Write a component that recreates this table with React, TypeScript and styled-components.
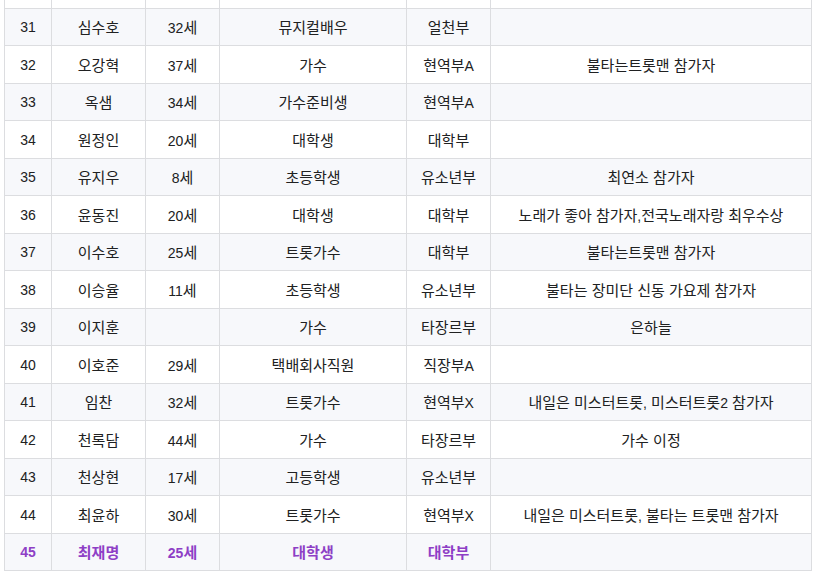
import styled, { createGlobalStyle } from 'styled-components';

const GlobalStyle = createGlobalStyle`
  html, body {
    margin: 0;
    padding: 0;
    background: #fff;
  }
`;

const Page = styled.div`
  padding: 0 7px 0 4px;
  overflow: hidden;
  height: 577px;
`;

const Table = styled.table`
  width: 807px;
  border-collapse: collapse;
  table-layout: fixed;
  font-family: "Liberation Sans", "Noto Sans CJK KR", sans-serif;
  font-size: 15px;
  color: #202122;
`;

const Row = styled.tr<{ $odd?: boolean; $spacer?: boolean }>`
  height: ${(p) => (p.$spacer ? '8px' : '37.5px')};
  background: ${(p) => (p.$odd ? '#f7f8fb' : '#fff')};
`;

const Cell = styled.td<{ $hl?: boolean; $spacer?: boolean }>`
  border: 1px solid #dcdde0;
  border-top: ${(p) => (p.$spacer ? 'none' : '1px solid #dcdde0')};
  padding: 0 6px;
  text-align: center;
  vertical-align: middle;
  white-space: nowrap;
  overflow: hidden;
  color: ${(p) => (p.$hl ? '#8e3fc6' : '#202122')};
  font-weight: ${(p) => (p.$hl ? 700 : 400)};
`;

const Latin = styled.span`
  font-size: 14px;
`;

type Entry = [string, string, string, string, string, string];

const rows: Entry[] = [
  ['31', '심수호', '32세', '뮤지컬배우', '얼천부', ''],
  ['32', '오강혁', '37세', '가수', '현역부A', '불타는트롯맨 참가자'],
  ['33', '옥샘', '34세', '가수준비생', '현역부A', ''],
  ['34', '원정인', '20세', '대학생', '대학부', ''],
  ['35', '유지우', '8세', '초등학생', '유소년부', '최연소 참가자'],
  ['36', '윤동진', '20세', '대학생', '대학부', '노래가 좋아 참가자,전국노래자랑 최우수상'],
  ['37', '이수호', '25세', '트롯가수', '대학부', '불타는트롯맨 참가자'],
  ['38', '이승율', '11세', '초등학생', '유소년부', '불타는 장미단 신동 가요제 참가자'],
  ['39', '이지훈', '', '가수', '타장르부', '은하늘'],
  ['40', '이호준', '29세', '택배회사직원', '직장부A', ''],
  ['41', '임찬', '32세', '트롯가수', '현역부X', '내일은 미스터트롯, 미스터트롯2 참가자'],
  ['42', '천록담', '44세', '가수', '타장르부', '가수 이정'],
  ['43', '천상현', '17세', '고등학생', '유소년부', ''],
  ['44', '최윤하', '30세', '트롯가수', '현역부X', '내일은 미스터트롯, 불타는 트롯맨 참가자'],
  ['45', '최재명', '25세', '대학생', '대학부', ''],
];

const widths = [47, 94, 74, 187, 84, 321];

// digits and latin letters are set a size smaller than the hangul, as in the source
function Text({ value }: { value: string }) {
  const parts = value.split(/([0-9A-Za-z,]+)/).filter(Boolean);
  return (
    <>
      {parts.map((p, i) =>
        /[0-9A-Za-z,]/.test(p) ? <Latin key={i}>{p}</Latin> : <span key={i}>{p}</span>
      )}
    </>
  );
}

export default function App() {
  return (
    <>
      <GlobalStyle />
      <Page>
        <Table>
          <colgroup>
            {widths.map((w, i) => (
              <col key={i} style={{ width: w }} />
            ))}
          </colgroup>
          <tbody>
            <Row $spacer $odd={false}>
              {widths.map((_, i) => (
                <Cell key={i} $spacer />
              ))}
            </Row>
            {rows.map((r) => {
              const n = Number(r[0]);
              const hl = n === 45;
              return (
                <Row key={r[0]} $odd={n % 2 === 1}>
                  {r.map((v, i) => (
                    <Cell key={i} $hl={hl}>
                      <Text value={v} />
                    </Cell>
                  ))}
                </Row>
              );
            })}
          </tbody>
        </Table>
      </Page>
    </>
  );
}
